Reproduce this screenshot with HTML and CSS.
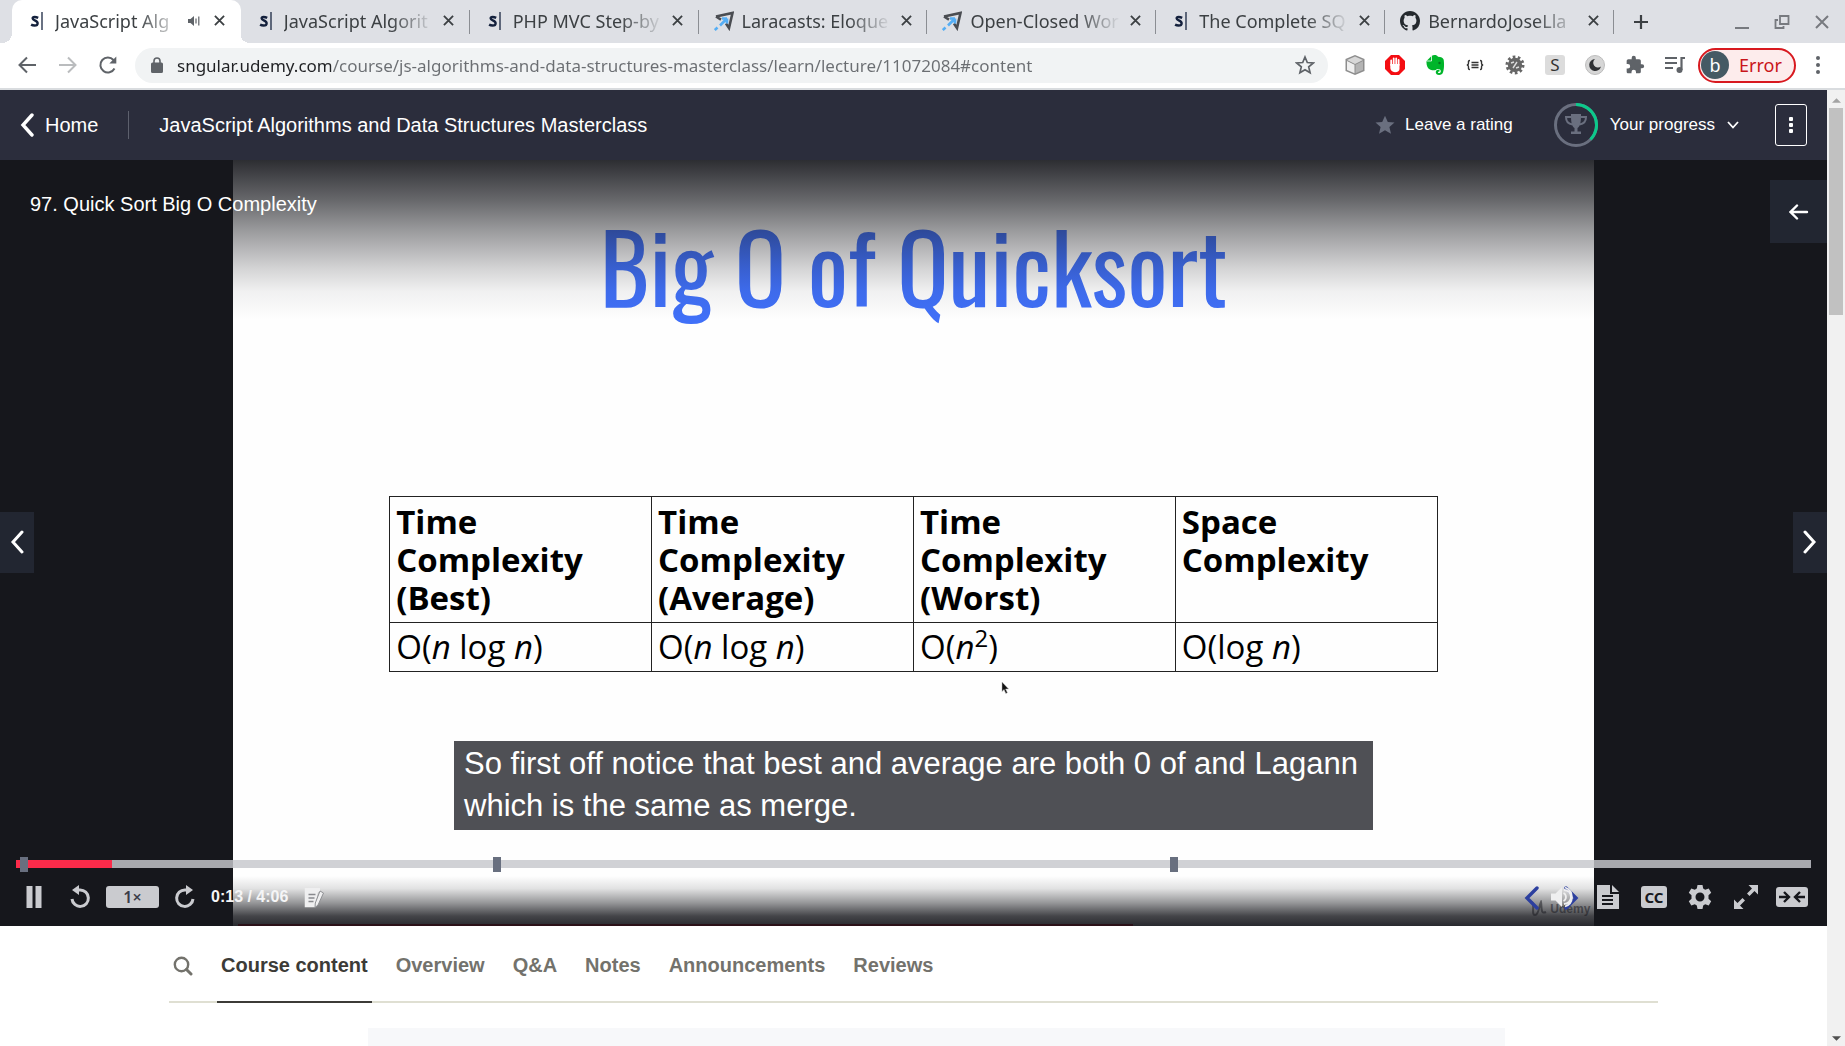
FILE: index.html
```html
<!DOCTYPE html>
<html lang="en">
<head>
<meta charset="utf-8">
<title>JavaScript Algorithms and Data Structures Masterclass</title>
<link rel="stylesheet" href="styles.css">
</head>
<body>
<svg class="defs" aria-hidden="true">
  <symbol id="x" viewBox="0 0 12 12"><path d="M1 1l10 10M11 1L1 11" fill="none" stroke="currentColor" stroke-width="2"/></symbol>
  <symbol id="sngular" viewBox="0 0 14 22"><path d="M8.300 7.600C7 6.900 5.600 6.600 4.300 6.600 2.800 6.600 2.200 7.300 2.200 8.200c0 2.300 5.500 1.800 5.500 5.200 0 1.800-1.500 2.600-3.400 2.600-1.400 0-2.600-.3-3.800-1" fill="none" stroke="#14213d" stroke-width="2.600"/><path d="M12.500 1v20" stroke="#14213d" stroke-width="1.400"/></symbol>
  <symbol id="laracasts" viewBox="0 0 20 20"><path d="M2 5.500L18.500 2l-3.500 15-3-4.500M2 5.500l5 3.200" fill="none" stroke="#4a4d52" stroke-width="2.600"/><path d="M13 7.500v5M13 7.500H8M12.500 8L6 14.500M3.500 16.500L.8 19" fill="none" stroke="#55aef5" stroke-width="2.600"/></symbol>
</svg>

<header class="tabstrip">
  <nav class="tabs" aria-label="Open tabs">
    <div class="tab active"><svg class="fav narrow"><use href="#sngular"/></svg><a class="tab-title" href="#">JavaScript Alg</a>
      <svg class="audio" viewBox="0 0 12 12"><path d="M0 4h2.500L6 1v10L2.500 8H0z" fill="currentColor"/><path d="M8 3.500v5M10.800 1.500v9" stroke="currentColor" stroke-width="1.200"/></svg>
      <button class="close" aria-label="Close tab"><svg><use href="#x"/></svg></button></div>
    <div class="tab plain"><svg class="fav narrow"><use href="#sngular"/></svg><a class="tab-title" href="#">JavaScript Algorit</a><button class="close" aria-label="Close tab"><svg><use href="#x"/></svg></button></div>
    <div class="tab plain"><svg class="fav narrow"><use href="#sngular"/></svg><a class="tab-title" href="#">PHP MVC Step-by</a><button class="close" aria-label="Close tab"><svg><use href="#x"/></svg></button></div>
    <div class="tab plain"><svg class="fav"><use href="#laracasts"/></svg><a class="tab-title" href="#">Laracasts: Eloque</a><button class="close" aria-label="Close tab"><svg><use href="#x"/></svg></button></div>
    <div class="tab plain"><svg class="fav"><use href="#laracasts"/></svg><a class="tab-title" href="#">Open-Closed Wor</a><button class="close" aria-label="Close tab"><svg><use href="#x"/></svg></button></div>
    <div class="tab plain"><svg class="fav narrow"><use href="#sngular"/></svg><a class="tab-title" href="#">The Complete SQ</a><button class="close" aria-label="Close tab"><svg><use href="#x"/></svg></button></div>
    <div class="tab plain"><svg class="fav" viewBox="0 0 16 16"><path fill="#24292e" d="M8 0C3.580 0 0 3.580 0 8c0 3.540 2.290 6.530 5.470 7.590.4.070.55-.17.55-.38 0-.19-.01-.82-.01-1.490-2.010.37-2.530-.49-2.690-.94-.09-.23-.48-.94-.82-1.130-.28-.15-.68-.52-.01-.53.63-.01 1.080.58 1.230.82.72 1.210 1.870.87 2.330.66.070-.52.28-.87.51-1.070-1.780-.2-3.640-.89-3.640-3.950 0-.87.31-1.590.82-2.150-.08-.2-.36-1.020.08-2.120 0 0 .67-.21 2.200.82.64-.18 1.320-.27 2-.27s1.360.09 2 .27c1.530-1.040 2.200-.82 2.200-.82.44 1.100.16 1.920.08 2.120.51.56.82 1.270.82 2.150 0 3.070-1.870 3.750-3.650 3.950.29.25.54.73.54 1.480 0 1.070-.01 1.930-.01 2.200 0 .21.15.46.55.38A8.010 8.010 0 0 0 16 8c0-4.420-3.580-8-8-8z"/></svg><a class="tab-title" href="#">BernardoJoseLla</a><button class="close" aria-label="Close tab"><svg><use href="#x"/></svg></button></div>
  </nav>
  <button class="newtab" aria-label="New tab"><svg viewBox="0 0 16 16"><path d="M8 1v14M1 8h14" stroke="#3c4043" stroke-width="2.200"/></svg></button>
  <div class="window-buttons">
    <button aria-label="Minimise"><svg viewBox="0 0 16 16"><path d="M1 14h14" stroke="#777a7f" stroke-width="2"/></svg></button>
    <button aria-label="Restore"><svg viewBox="0 0 16 16"><path d="M6 2h8.500v8H6zM4 6H1.500v8h8v-2" fill="none" stroke="#777a7f" stroke-width="1.800"/></svg></button>
    <button aria-label="Close window"><svg viewBox="0 0 16 16"><path d="M2 2l12 12M14 2L2 14" stroke="#777a7f" stroke-width="2"/></svg></button>
  </div>
</header>

<div class="toolbar">
  <div class="nav-buttons">
    <button aria-label="Back"><svg viewBox="0 0 20 20"><path d="M18 10H2M9 2.500L1.500 10 9 17.500" fill="none" stroke="#5f6368" stroke-width="2"/></svg></button>
    <button aria-label="Forward"><svg viewBox="0 0 20 20"><path d="M1 10h16M10 2.500l7.500 7.500-7.500 7.500" fill="none" stroke="#babcbe" stroke-width="2"/></svg></button>
    <button aria-label="Reload"><svg viewBox="0 0 20 20"><path d="M16.500 13.500A7.500 7.500 0 1 1 15.500 5l1.500 1.800" fill="none" stroke="#5f6368" stroke-width="2"/><path d="M18.300 1.500v7h-7z" fill="#5f6368"/></svg></button>
  </div>
  <div class="omnibox">
    <svg class="lock" viewBox="0 0 12 16"><path d="M1.500 5.500h9A1.500 1.500 0 0 1 12 7v7.500a1.500 1.500 0 0 1-1.500 1.500h-9A1.500 1.500 0 0 1 0 14.500V7a1.500 1.500 0 0 1 1.500-1.500z" fill="#5f6368"/><path d="M3 7V4a3 3 0 0 1 6 0v3" fill="none" stroke="#5f6368" stroke-width="1.600"/></svg>
    <input class="url" type="text" aria-label="Address" value="sngular.udemy.com/course/js-algorithms-and-data-structures-masterclass/learn/lecture/11072084#content">
    <button aria-label="Bookmark"><svg viewBox="0 0 20 20"><path d="M10 2l2.300 5.500 6 .5-4.600 3.900 1.400 5.900L10 14.700l-5.100 3.100 1.400-5.900L1.700 8l6-.5z" fill="none" stroke="#5f6368" stroke-width="1.700"/></svg></button>
  </div>
  <div class="extensions">
    <button aria-label="Cube"><svg viewBox="0 0 20 20"><path d="M10 0l9.500 4v12L10 20 .5 16V4z" fill="#8d8d8d"/><path d="M10 1.500L18 5l-8 4-8-4z" fill="#d8d8d8"/><path d="M2 6l7.500 3.800v8.400L2 15z" fill="#efefef"/><path d="M18 6l-7.500 3.800v8.400L18 15z" fill="#b4b4b4"/></svg></button>
    <button aria-label="Ad blocker"><svg viewBox="0 0 20 20"><path d="M6 0h8l6 6v8l-6 6H6l-6-6V6z" fill="#f40d12"/><path d="M6.200 10V5.500M8.700 9V3.500M11.200 9V3.500M13.600 10V5" stroke="#fff" stroke-width="1.800" stroke-linecap="round"/><path d="M5.300 9h9.200v5c0 2-1.500 3.200-4.500 3.200S5.300 15 5.300 13z" fill="#fff"/></svg></button>
    <button aria-label="Evernote"><svg viewBox="0 0 20 20"><path d="M1.500 6L6.500 1C9-.5 12 0 13 1.800c3 .3 5.200.8 5.700 3 .6 4.200.4 9.200-.6 12.200-.6 2.200-2 3-4 3-2.400 0-3.600-1.400-3.300-3.200.3-1.600 1.600-2.100 3.700-1.900v1.700c-1-.1-1.600.2-1.500.9.1.8 2.600 1 2.800-1.100.1-2-1.500-2.800-3.800-2.400-.7 1.400-3.700 1.800-6.500.8C2.400 13.700 1.200 9.800 1.500 6z" fill="#00b52a"/><path d="M6.500 1v5H1.500" fill="none" stroke="#fff" stroke-width=".8"/><circle cx="14.500" cy="8" r="1.200" fill="#06751e"/></svg></button>
    <button aria-label="JSON viewer"><svg viewBox="0 0 20 20"><path d="M5 5.500c-2 0-1.500 1.500-1.500 2.700 0 1.300-.6 1.800-1.700 1.800 1.100 0 1.700.5 1.700 1.800 0 1.200-.5 2.700 1.500 2.700M15 5.500c2 0 1.500 1.500 1.500 2.700 0 1.300.6 1.800 1.700 1.800-1.100 0-1.700.5-1.700 1.800 0 1.200.5 2.700-1.500 2.700M6.500 7.500h7M6.500 10h7M6.500 12.500h7" fill="none" stroke="#333" stroke-width="1.400"/></svg></button>
    <button aria-label="Bug finder"><svg viewBox="0 0 20 20"><circle cx="10" cy="10" r="8" fill="none" stroke="#666" stroke-width="3" stroke-dasharray="2.600 2.430"/><circle cx="10" cy="10" r="7.200" fill="#666"/><path d="M6 8l3-1M11 13l3-1M8 13l4-6" fill="none" stroke="#ddd" stroke-width="1.400"/></svg></button>
    <button class="s-ext" aria-label="S extension"><span>S</span></button>
    <button aria-label="Dark mode"><svg viewBox="0 0 20 20"><circle cx="10" cy="10" r="9.500" fill="#d6d6d6" stroke="#bdbdbd"/><path d="M10 4a6 6 0 1 0 6 7.500A4.500 4.500 0 0 1 10 4z" fill="#303235"/></svg></button>
    <button aria-label="Extensions"><svg viewBox="0 0 24 24"><path d="M20.500 11H19V7a2 2 0 0 0-2-2h-4V3.500a2.500 2.500 0 0 0-5 0V5H4a2 2 0 0 0-2 2v3.800h1.500a2.700 2.700 0 0 1 0 5.400H2V20c0 1.100.9 2 2 2h3.800v-1.500a2.700 2.700 0 0 1 5.400 0V22H17a2 2 0 0 0 2-2v-4h1.500a2.500 2.500 0 0 0 0-5z" fill="#5f6368"/></svg></button>
    <button aria-label="Media"><svg viewBox="0 0 20 20"><path d="M0 3h12M0 8h12M0 13h8" stroke="#5f6368" stroke-width="2"/><path d="M16.500 15V3H20" fill="none" stroke="#5f6368" stroke-width="2.200"/><circle cx="14.500" cy="15" r="3" fill="#5f6368"/></svg></button>
  </div>
  <button class="profile"><span class="avatar">b</span><span>Error</span></button>
  <button class="menu" aria-label="Menu"><svg viewBox="0 0 20 20"><g fill="#5f6368"><circle cx="10" cy="3" r="2"/><circle cx="10" cy="10" r="2"/><circle cx="10" cy="17" r="2"/></g></svg></button>
</div>

<div class="viewport">
  <main class="page">
    <header class="course-header">
      <a class="home" href="#"><svg viewBox="0 0 14 24"><path d="M12 2L3 12l9 10" fill="none" stroke="#fff" stroke-width="3.400" stroke-linecap="round"/></svg>Home</a>
      <a class="course-title" href="#">JavaScript Algorithms and Data Structures Masterclass</a>
      <button class="rating"><svg viewBox="0 0 20 20"><path d="M10 .8l2.800 6.200 6.700.6-5.100 4.500 1.600 6.700-6-3.600-6 3.600 1.600-6.700L.5 7.600 7.200 7z" fill="#6a6f7f"/></svg>Leave a rating</button>
      <button class="progress">
        <svg class="ring" viewBox="0 0 44 44"><circle cx="22" cy="22" r="20.500" fill="none" stroke="#6a6f7f" stroke-width="3"/><path d="M22 1.500A20.500 20.500 0 0 1 36.500 36.500" fill="none" stroke="#0cc98b" stroke-width="3"/><path d="M17 11h10v2c0 8-1.500 11-3.500 12v3.500h3.500V31H17v-2.500h3.500V25C18.500 24 17 21 17 13z" fill="#6a6f7f"/><path d="M17 14h-5c0 5 2.500 7 6.500 7.500M27 14h5c0 5-2.500 7-6.500 7.500" fill="none" stroke="#6a6f7f" stroke-width="2"/></svg>
        Your progress
        <svg class="caret" viewBox="0 0 12 8"><path d="M1 1l5 5.500L11 1" fill="none" stroke="#fff" stroke-width="1.800"/></svg></button>
      <button class="more" aria-label="More options"><svg viewBox="0 0 6 18"><g fill="#fff"><rect x="1" y="1" width="4" height="4" rx="1"/><rect x="1" y="7" width="4" height="4" rx="1"/><rect x="1" y="13" width="4" height="4" rx="1"/></g></svg></button>
    </header>

    <section class="player" aria-label="Video player">
      <div class="slide">
        <h1>Big O of Quicksort</h1>
        <table>
          <thead><tr><th>Time Complexity (Best)</th><th>Time Complexity (Average)</th><th>Time Complexity (Worst)</th><th>Space Complexity</th></tr></thead>
          <tbody><tr><td>O(<i>n</i> log <i>n</i>)</td><td>O(<i>n</i> log <i>n</i>)</td><td>O(<i>n</i><sup>2</sup>)</td><td>O(log <i>n</i>)</td></tr></tbody>
        </table>
        <svg class="cursor" viewBox="0 0 8 14"><path d="M1 1v9.500l2-2 1.800 4 1.600-.8-1.800-3.700h3z" fill="#111" stroke="#bbb" stroke-width=".5"/></svg>
        <div class="watermark"><svg viewBox="0 0 18 18"><path d="M2 2c3 3-1 13 3 13S9 6 11 2c1 4-1 13 5 10" fill="none" stroke="#8a8a8e" stroke-width="2"/></svg>Udemy</div>
      </div>
      <div class="shade-top"></div>
      <div class="shade-bottom"></div>
      <div class="overlay">
        <div class="top-row">
          <p class="lecture">97. Quick Sort Big O Complexity</p>
          <button class="open-panel" aria-label="Open course content"><svg viewBox="0 0 20 16"><path d="M18 8H2M8 1.500L1.500 8 8 14.500" fill="none" stroke="#fff" stroke-width="2.400" stroke-linecap="round"/></svg></button>
        </div>
        <div class="step-row">
          <button class="step" aria-label="Previous lecture"><svg viewBox="0 0 14 24"><path d="M12 2L3 12l9 10" fill="none" stroke="#fff" stroke-width="3" stroke-linecap="round"/></svg></button>
          <button class="step" aria-label="Next lecture"><svg viewBox="0 0 14 24"><path d="M2 2l9 10-9 10" fill="none" stroke="#fff" stroke-width="3" stroke-linecap="round"/></svg></button>
        </div>
        <div class="bottom">
          <p class="caption">So first off notice that best and average are both 0 of and Lagann which is the same as merge.</p>
          <div class="track">
            <div class="played" style="width:5.35%"></div>
            <span class="marker" style="left:0.22%"></span><span class="marker" style="left:26.55%"></span><span class="marker" style="left:64.3%"></span>
          </div>
          <div class="controls">
            <button class="pause" aria-label="Pause"><svg viewBox="0 0 24 24"><path d="M4.500 1h6v22h-6zM13.500 1h6v22h-6z" fill="currentColor"/></svg></button>
            <button aria-label="Rewind"><svg viewBox="0 0 24 24"><path d="M4 14a8.200 8.200 0 1 0 8-9H9" fill="none" stroke="currentColor" stroke-width="3"/><path d="M11 0v10L4 5z" fill="currentColor"/></svg></button>
            <button class="rate">1×</button>
            <button aria-label="Forward"><svg viewBox="0 0 24 24"><path d="M20 14a8.200 8.200 0 1 1-8-9h3" fill="none" stroke="currentColor" stroke-width="3"/><path d="M13 0v10l7-5z" fill="currentColor"/></svg></button>
            <span class="time">0:13 / 4:06</span>
            <button class="note" aria-label="Add note"><svg viewBox="0 0 24 24"><path d="M3 3h15v4h-2l-3 15H3z" fill="currentColor"/><path d="M3.500 3v18.500H13" fill="none" stroke="currentColor" stroke-width="1.500"/><path d="M6.500 9.500h7M6.500 13h6M6.500 16.500h5" stroke="#88898d" stroke-width="1.400"/><path d="M18 6l3.500 2L16 20l-3 2.500.3-4.500z" fill="currentColor" stroke="#88898d" stroke-width=".9"/></svg></button>
            <span class="grow"></span>
            <button class="note volume" aria-label="Volume"><svg class="slide-arrows" viewBox="0 0 56 24"><path d="M13 2L3 12l10 10M42 2l10 10-10 10" fill="none" stroke="#2c3f9f" stroke-width="3.400" stroke-linecap="round"/></svg><svg viewBox="0 0 24 24"><path d="M1 8.500h4.500L12 2v20l-6.500-6.500H1z" fill="currentColor"/><path d="M13.500 8a4.500 4.500 0 0 1 0 8M14 5a7 7 0 0 1 0 14M15 2.500a10 10 0 0 1 0 19" fill="none" stroke="currentColor" stroke-width="1.800"/></svg></button>
            <button aria-label="Transcript"><svg viewBox="0 0 24 24"><path d="M1 0h13v9h9v15H1z" fill="currentColor"/><path d="M16 0l7 7h-7z" fill="currentColor"/><path d="M6 11h11M6 15h11M6 19h11" stroke="#16171c" stroke-width="1.800"/></svg></button>
            <button class="cc" aria-label="Captions"><span>CC</span></button>
            <button aria-label="Settings"><svg viewBox="0 0 24 24"><path d="M9.500 0h5l.7 3.500 2 1.200 3.500-1.200 2.500 4.300-2.700 2.400v3.600l2.700 2.400-2.500 4.300-3.500-1.200-2 1.200-.7 3.500h-5l-.7-3.500-2-1.200-3.500 1.200L.8 16.200l2.700-2.400v-3.600L.8 7.800l2.500-4.300 3.500 1.200 2-1.200zM12 7.500a4.500 4.500 0 1 0 0 9 4.500 4.500 0 0 0 0-9z" fill="currentColor" fill-rule="evenodd"/></svg></button>
            <button aria-label="Full screen"><svg viewBox="0 0 24 24"><path d="M14.500 0H24v9.500l-3.500-3.500-5 5-2.500-2.500 5-5zM9.500 24H0v-9.500L3.500 18l5-5 2.500 2.500-5 5z" fill="currentColor"/></svg></button>
            <button aria-label="Expanded view"><svg class="wide" viewBox="0 0 32 20"><rect x="0" y="0" width="32" height="20" rx="3" fill="currentColor"/><path d="M3 10h9M8 5l5 5-5 5M29 10h-9M24 5l-5 5 5 5" fill="none" stroke="#16171c" stroke-width="2.400"/></svg></button>
          </div>
        </div>
      </div>
    </section>

    <section class="below">
      <nav class="course-nav" aria-label="Course sections">
        <button aria-label="Search"><svg viewBox="0 0 20 20"><circle cx="8.500" cy="8.500" r="6.700" fill="none" stroke="#73726c" stroke-width="2.400"/><path d="M13.500 13.500l4.500 4.500" stroke="#73726c" stroke-width="3" stroke-linecap="round"/></svg></button>
        <a class="current" href="#">Course content</a><a href="#">Overview</a><a href="#">Q&amp;A</a><a href="#">Notes</a><a href="#">Announcements</a><a href="#">Reviews</a>
      </nav>
      <div class="content-box"></div>
    </section>
  </main>
  <div class="scrollbar" aria-hidden="true">
    <svg viewBox="0 0 10 5"><path d="M0 5l5-5 5 5z" fill="#a3a3a3"/></svg>
    <div class="rail"><div class="thumb"></div></div>
    <svg viewBox="0 0 10 5"><path d="M0 0l5 5 5-5z" fill="#505050"/></svg>
  </div>
</div>
</body>
</html>
```
FILE: styles.css
```css
* { box-sizing: border-box; }
body { margin: 0; height: 100vh; display: flex; flex-direction: column; overflow: hidden; background: #fff; font-family: "Liberation Sans", Arial, sans-serif; font-size: 20px; }
button { display: flex; align-items: center; justify-content: center; flex: none; padding: 0; border: 0; background: none; color: inherit; font: inherit; }
a { color: inherit; text-decoration: none; }
p, h1 { margin: 0; }
svg { display: block; flex: none; }
.defs { width: 0; height: 0; position: absolute; }

/* browser tabs */
.tabstrip, .toolbar { font-family: "Noto Sans", "Open Sans", sans-serif; font-size: 17px; flex: none; display: flex; align-items: center; }
.tabstrip { height: 43px; padding: 0 8px 0 12px; background: #dee0e5; color: #3c4043; font-size: 18px; }
.tabs { display: flex; flex: 1 1 0; max-width: 1602px; min-width: 0; height: 43px; }
.tab { position: relative; flex: 1 1 0; min-width: 0; display: flex; align-items: center; padding: 0 12px 2px 19px; border-right: 1px solid transparent; }
.tab.active { background: #fff; border-radius: 10px 10px 0 0; }
.tab.active::before, .tab.active::after { content: ""; position: absolute; bottom: 0; width: 10px; height: 10px; }
.tab.active::before { right: 100%; background: radial-gradient(circle at 0 0, transparent 10px, #fff 10px); }
.tab.active::after { left: 100%; background: radial-gradient(circle at 100% 0, transparent 10px, #fff 10px); }
.tab.plain::after { content: ""; position: absolute; right: -1px; top: 10px; width: 1px; height: 24px; background: #8b8e93; }
.fav { width: 20px; height: 20px; margin-right: 8px; margin-left: -4px; }
.fav.narrow { width: 14px; margin-right: 11px; margin-left: -1px; }
.tab-title { flex: 1; min-width: 0; overflow: hidden; white-space: nowrap; margin-right: 6px; line-height: 24px; -webkit-mask-image: linear-gradient(to right, #000 calc(100% - 44px), transparent); mask-image: linear-gradient(to right, #000 calc(100% - 44px), transparent); }
.audio { width: 12px; height: 12px; color: #5f6368; margin-right: 12px; }
.close { width: 16px; height: 16px; }
.close svg { width: 11px; height: 11px; }
.newtab { width: 54px; height: 40px; }
.newtab svg { width: 16px; height: 16px; }
.window-buttons { display: flex; gap: 24px; margin-left: auto; padding-right: 7px; }
.window-buttons svg { width: 16px; height: 16px; }

/* browser toolbar */
.toolbar { height: 47px; padding: 0 16px 1px 18px; border-bottom: 2px solid #d9dcdf; }
.nav-buttons { display: flex; gap: 20px; margin-right: 17px; }
.nav-buttons svg { width: 20px; height: 20px; }
.omnibox { flex: 1; min-width: 0; display: flex; align-items: center; height: 35px; padding: 0 13px 0 16px; border-radius: 18px; background: #f1f3f4; }
.lock { width: 12px; height: 16px; }
.url { flex: 1; min-width: 0; margin-left: 14px; padding: 0; border: 0; font: inherit; color: transparent; background: linear-gradient(to right, #202124 154px, #6b6e72 154px); -webkit-background-clip: text; background-clip: text; }
.omnibox button svg { width: 20px; height: 20px; }
.extensions { display: flex; gap: 20px; margin: 0 13px 0 17px; }
.extensions button, .extensions svg { width: 20px; height: 20px; }
.s-ext span { width: 20px; line-height: 20px; border-radius: 3px; background: #dcdcdc; color: #333; font-size: 17px; }
.profile { height: 35px; width: 98px; gap: 10px; justify-content: flex-start; padding-left: 1px; border: 2px solid #d8191f; border-radius: 18px; background: #fdecec; color: #c9151b; font-size: 18px; }
.avatar { width: 28px; line-height: 28px; border-radius: 14px; background: #455a64; color: #fff; }
.menu { margin-left: 11px; width: 22px; }
.menu svg { width: 20px; height: 20px; }

.viewport { flex: 1; min-height: 0; display: flex; }
.page { flex: 1; min-width: 0; overflow: hidden; }
.scrollbar { flex: none; width: 18px; display: flex; flex-direction: column; align-items: center; padding: 8px 0 5px; gap: 5px; background: #f1f1f1; }
.scrollbar svg { width: 9px; height: 5px; }
.rail { flex: 1; width: 14px; }
.thumb { height: 22.4%; background: #c1c1c1; }

/* course header */
.course-header { display: flex; align-items: center; height: 70px; padding: 0 20px; background: #2b2d3c; color: #fff; }
.home { display: flex; align-items: center; gap: 11px; padding-right: 30px; margin-right: 30px; line-height: 28px; border-right: 1px solid #5d606d; }
.home svg { width: 14px; height: 24px; }
.course-title { flex: 1; }
.rating, .progress { font-size: 17px; }
.rating { gap: 10px; margin-right: 41px; }
.rating svg { width: 20px; height: 20px; }
.progress { gap: 12px; margin-right: 36px; }
.ring { width: 44px; height: 44px; }
.caret { width: 12px; height: 8px; }
.more { width: 32px; height: 42px; border: 1px solid #fff; border-radius: 3px; }
.more svg { width: 6px; height: 18px; }

/* video player */
.player { position: relative; height: calc(100vh - 280px); overflow: hidden; background: #16171c; }
.slide { position: relative; height: 100%; aspect-ratio: 16 / 9; margin: 0 auto; padding-top: 46px; background: #fefefe; color: #000; font-family: "Open Sans", "Noto Sans", sans-serif; }
.slide h1 { text-align: center; font: 400 95px/116px "Oswald", "Open Sans Condensed", "Roboto Condensed", sans-serif; color: #4070f8; }
.slide table { width: 77%; margin: 174px auto 0; border-collapse: collapse; table-layout: fixed; font-size: 33px; line-height: 38px; text-align: left; }
.slide th, .slide td { border: 1px solid #222; padding: 6px 40px 5px 6px; vertical-align: top; }
.slide td { padding: 5px 6px; }
.slide sup { font-size: 24px; line-height: 0; }
.cursor { position: absolute; left: 56.4%; top: 68%; width: 8px; height: 14px; }
.watermark { position: absolute; right: 4px; bottom: 8px; display: flex; align-items: center; gap: 2px; font: 700 12px/18px "Liberation Sans", sans-serif; color: #8a8a8e; }
.watermark svg { width: 18px; height: 18px; }
.shade-top, .shade-bottom { position: absolute; left: 0; right: 0; }
.shade-top { top: 0; height: 160px; background: linear-gradient(rgba(22,23,28,.9), rgba(22,23,28,.65) 25%, rgba(22,23,28,.43) 44%, rgba(22,23,28,.18) 68%, rgba(22,23,28,.06) 82%, rgba(22,23,28,0)); }
.shade-bottom { bottom: 0; height: 50px; background: linear-gradient(rgba(22,23,28,0), rgba(22,23,28,.12) 25%, rgba(22,23,28,.45) 54%, rgba(22,23,28,.8) 80%, rgba(22,23,28,.92)); }
.shade-bottom::after { content: ""; position: absolute; left: 13%; bottom: 0; width: 49%; height: 2px; background: #2b1118; }
.overlay { position: absolute; inset: 0; display: flex; flex-direction: column; justify-content: space-between; color: #fff; }
.top-row { display: flex; justify-content: space-between; padding: 20px 0 0 30px; }
.lecture { line-height: 48px; }
.open-panel { width: 57px; height: 63px; background: #222631; }
.open-panel svg { width: 20px; height: 16px; }
.step-row { position: absolute; inset: 0; display: flex; justify-content: space-between; align-items: center; padding-bottom: 2px; pointer-events: none; }
.step { width: 34px; height: 61px; background: #222631; pointer-events: auto; }
.step svg { width: 14px; height: 24px; }
.bottom { position: relative; display: flex; flex-direction: column; align-items: center; }
.caption { width: 919px; max-width: 90%; padding: 2px 10px 3px; margin-bottom: 30px; font-size: 31px; line-height: 42px; background: #4f5055; }
.track { position: relative; align-self: stretch; height: 8px; margin: 0 16px; background: rgba(199,200,205,.83); }
.played { height: 8px; background: #fb2b4a; }
.marker { position: absolute; top: -3px; width: 8px; height: 15px; background: #686f7f; }
.controls { align-self: stretch; display: flex; align-items: center; gap: 10px; height: 58px; padding: 0 19px 1px 18px; color: #cacbcf; }
.controls button { width: 32px; height: 26px; }
.controls svg { width: 24px; height: 24px; }
.controls .pause { margin-right: 4px; }
.controls .rate { width: 53px; height: 22px; border-radius: 3px; background: #cacbcf; color: #3a3c48; font: 600 16px/22px "Noto Sans", sans-serif; }
.time { font-size: 16px; font-weight: 700; color: #f5f5f6; }
.controls .note { color: #efeff0; }
.grow { flex: 1; }
.grow ~ button + button { margin-left: 4px; }
.volume { position: relative; }
.controls .slide-arrows { position: absolute; left: -22px; top: 2px; width: 56px; }
.volume svg + svg { position: relative; }
.cc span { width: 26px; line-height: 22px; border-radius: 3px; background: #cacbcf; color: #16171c; font: 700 15px/22px "Noto Sans", sans-serif; }
.controls .wide { width: 32px; height: 20px; }

/* course sections */
.course-nav { display: flex; gap: 20px; margin: 0 169px; padding-left: 4px; border-bottom: 2px solid #dfdfd2; color: #73726c; font-weight: 700; }
.course-nav button { width: 20px; height: 75px; padding-top: 4px; margin-right: 4px; }
.course-nav button svg { width: 20px; height: 20px; }
.course-nav a { padding: 3px 4px 0; line-height: 72px; margin-bottom: -2px; border-bottom: 2px solid transparent; white-space: nowrap; }
.course-nav .current { color: #3c3b37; border-bottom-color: #3c3b37; }
.content-box { height: 200px; margin: 25px 322px 0 368px; background: #f7f8fa; }
```
